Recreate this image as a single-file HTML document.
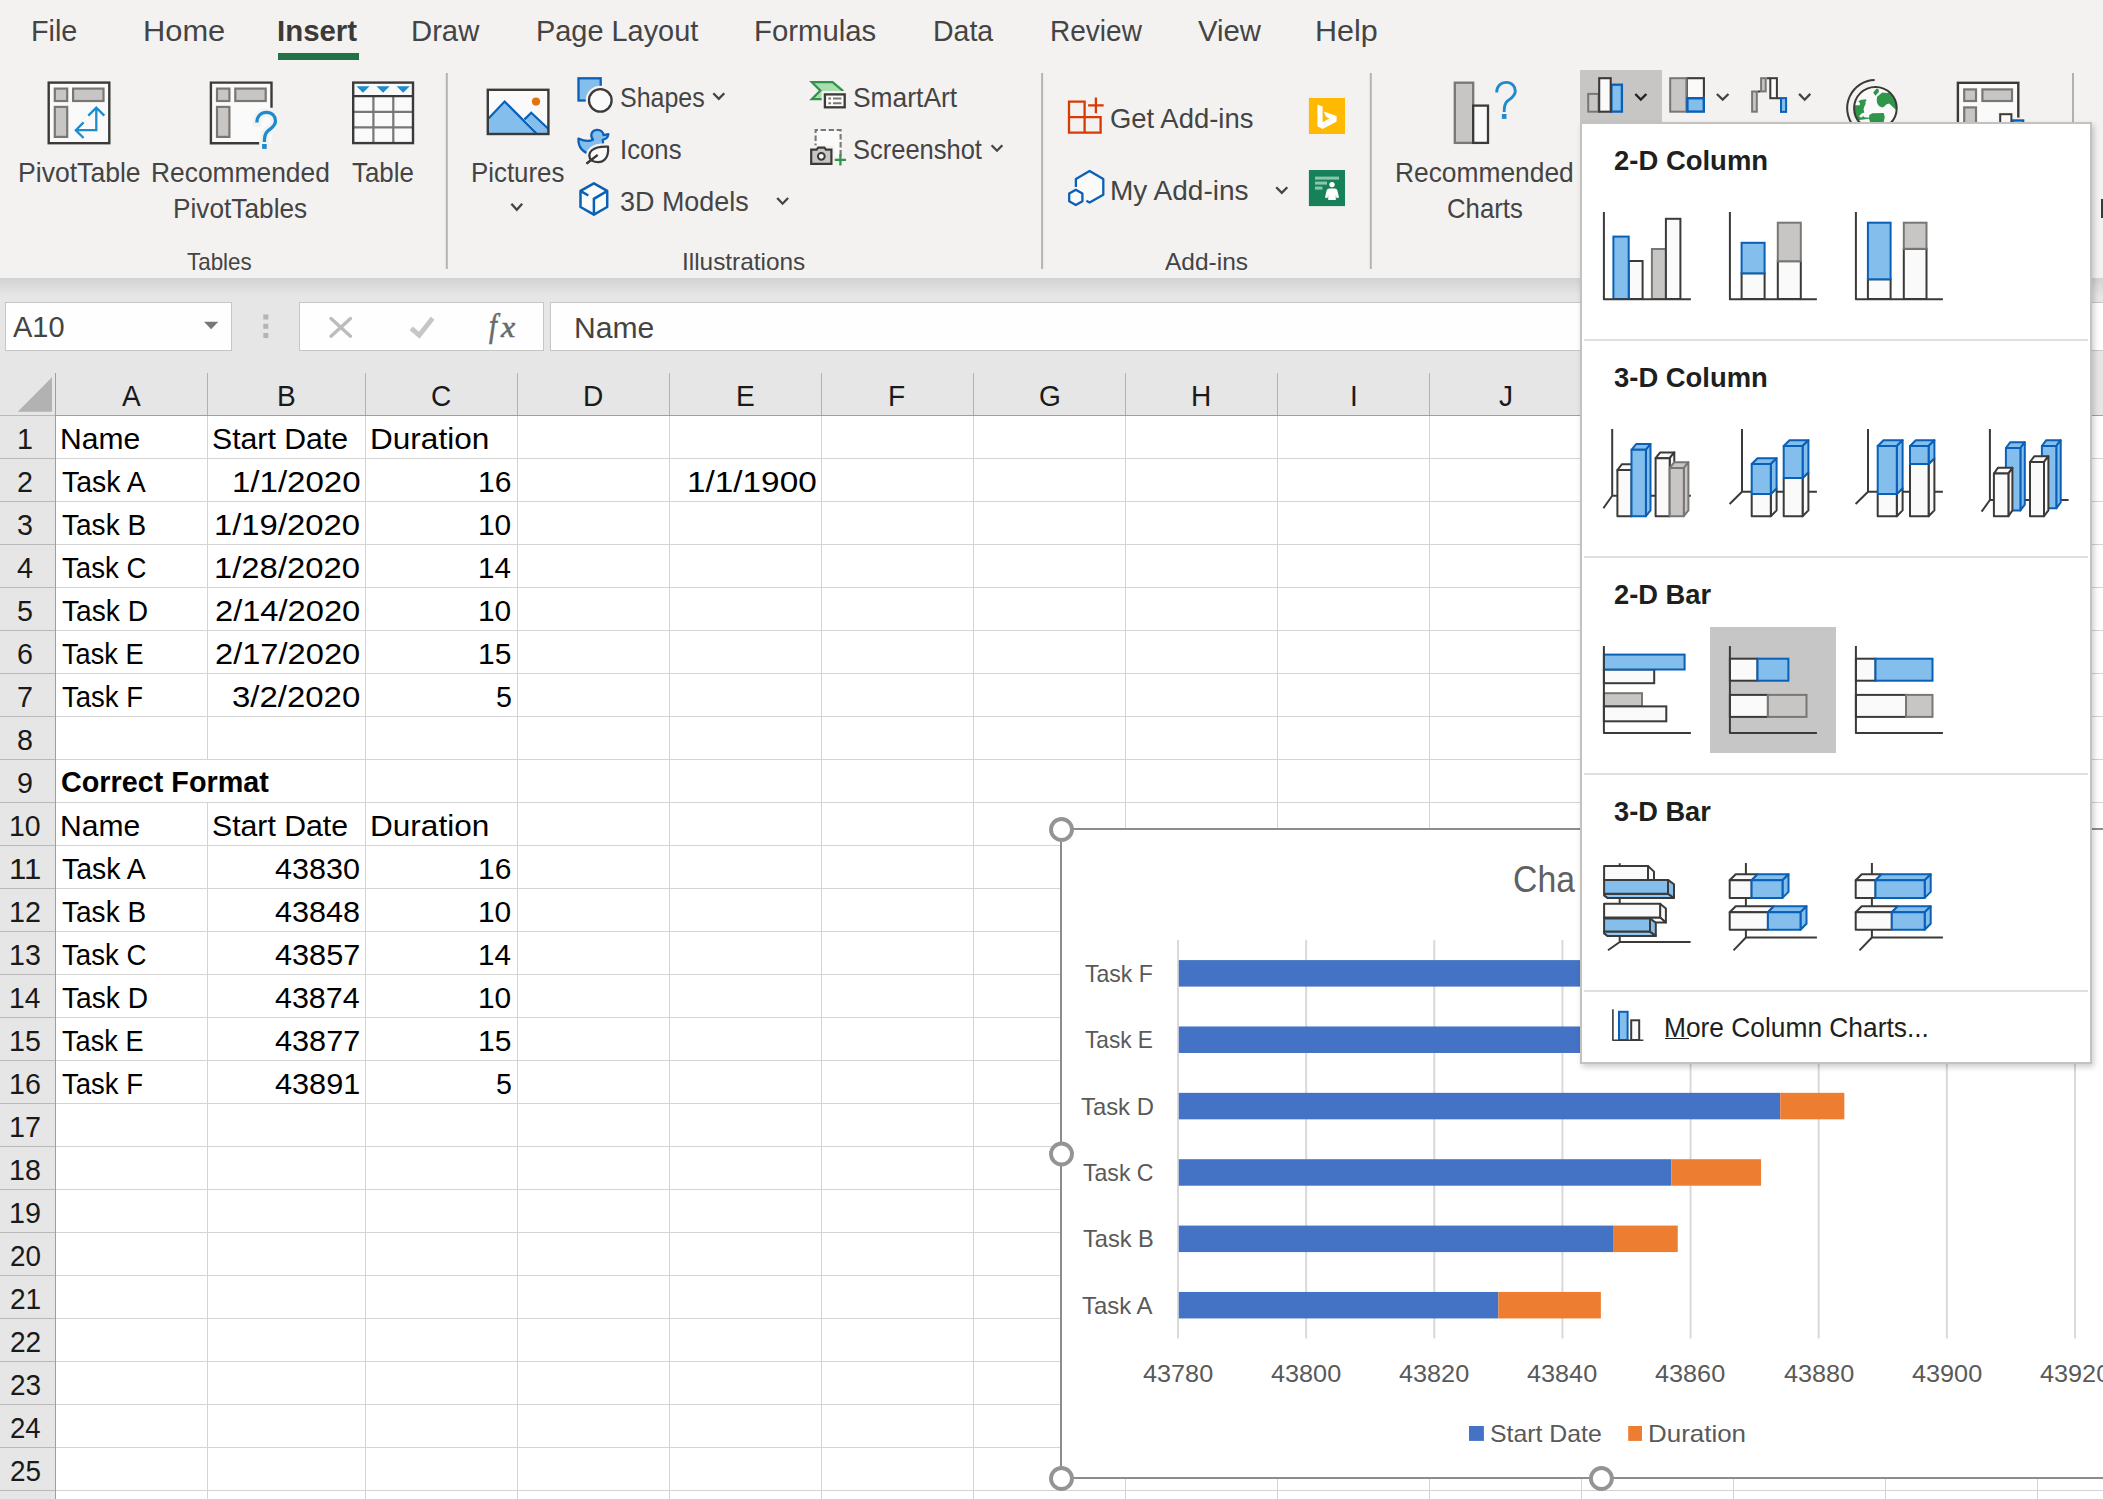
<!DOCTYPE html>
<html lang="en"><head><meta charset="utf-8"><title>Excel</title><style>
*{margin:0;padding:0;box-sizing:border-box}
html,body{width:2103px;height:1499px;overflow:hidden;background:#fff}
body{font-family:"Liberation Sans",sans-serif;position:relative}
#r{position:absolute;left:0;top:0;width:2103px;height:1499px;overflow:hidden}
#r div,#r svg{position:absolute}
.t{position:absolute;white-space:pre;transform-origin:0 0;display:block}
</style></head><body><div id="r">
<div style="left:0px;top:0px;width:2103px;height:278px;background:#f3f2f1;"></div>
<div style="left:0px;top:278px;width:2103px;height:137px;background:#e6e6e6;"></div>
<div style="left:0;top:278px;width:2103px;height:18px;background:linear-gradient(#d2d2d2,#d8d8d8 30%,#e6e6e6)"></div>
<div style="left:0px;top:415px;width:55px;height:1084px;background:#e6e6e6;"></div>
<svg width="2103" height="1499" viewBox="0 0 2103 1499" style="left:0;top:0" shape-rendering="crispEdges"><rect x="207" y="416" width="1" height="1083" fill="#d4d4d4"/><rect x="365" y="416" width="1" height="1083" fill="#d4d4d4"/><rect x="517" y="416" width="1" height="1083" fill="#d4d4d4"/><rect x="669" y="416" width="1" height="1083" fill="#d4d4d4"/><rect x="821" y="416" width="1" height="1083" fill="#d4d4d4"/><rect x="973" y="416" width="1" height="1083" fill="#d4d4d4"/><rect x="1125" y="416" width="1" height="1083" fill="#d4d4d4"/><rect x="1277" y="416" width="1" height="1083" fill="#d4d4d4"/><rect x="1429" y="416" width="1" height="1083" fill="#d4d4d4"/><rect x="1581" y="416" width="1" height="1083" fill="#d4d4d4"/><rect x="1733" y="416" width="1" height="1083" fill="#d4d4d4"/><rect x="1885" y="416" width="1" height="1083" fill="#d4d4d4"/><rect x="2037" y="416" width="1" height="1083" fill="#d4d4d4"/><rect x="56" y="458" width="2047" height="1" fill="#d4d4d4"/><rect x="56" y="501" width="2047" height="1" fill="#d4d4d4"/><rect x="56" y="544" width="2047" height="1" fill="#d4d4d4"/><rect x="56" y="587" width="2047" height="1" fill="#d4d4d4"/><rect x="56" y="630" width="2047" height="1" fill="#d4d4d4"/><rect x="56" y="673" width="2047" height="1" fill="#d4d4d4"/><rect x="56" y="716" width="2047" height="1" fill="#d4d4d4"/><rect x="56" y="759" width="2047" height="1" fill="#d4d4d4"/><rect x="56" y="802" width="2047" height="1" fill="#d4d4d4"/><rect x="56" y="845" width="2047" height="1" fill="#d4d4d4"/><rect x="56" y="888" width="2047" height="1" fill="#d4d4d4"/><rect x="56" y="931" width="2047" height="1" fill="#d4d4d4"/><rect x="56" y="974" width="2047" height="1" fill="#d4d4d4"/><rect x="56" y="1017" width="2047" height="1" fill="#d4d4d4"/><rect x="56" y="1060" width="2047" height="1" fill="#d4d4d4"/><rect x="56" y="1103" width="2047" height="1" fill="#d4d4d4"/><rect x="56" y="1146" width="2047" height="1" fill="#d4d4d4"/><rect x="56" y="1189" width="2047" height="1" fill="#d4d4d4"/><rect x="56" y="1232" width="2047" height="1" fill="#d4d4d4"/><rect x="56" y="1275" width="2047" height="1" fill="#d4d4d4"/><rect x="56" y="1318" width="2047" height="1" fill="#d4d4d4"/><rect x="56" y="1361" width="2047" height="1" fill="#d4d4d4"/><rect x="56" y="1404" width="2047" height="1" fill="#d4d4d4"/><rect x="56" y="1447" width="2047" height="1" fill="#d4d4d4"/><rect x="56" y="1490" width="2047" height="1" fill="#d4d4d4"/><rect x="56" y="1533" width="2047" height="1" fill="#d4d4d4"/><rect x="207" y="760" width="1" height="42" fill="#fff"/><rect x="207" y="373" width="1" height="42" fill="#b1b1b1"/><rect x="365" y="373" width="1" height="42" fill="#b1b1b1"/><rect x="517" y="373" width="1" height="42" fill="#b1b1b1"/><rect x="669" y="373" width="1" height="42" fill="#b1b1b1"/><rect x="821" y="373" width="1" height="42" fill="#b1b1b1"/><rect x="973" y="373" width="1" height="42" fill="#b1b1b1"/><rect x="1125" y="373" width="1" height="42" fill="#b1b1b1"/><rect x="1277" y="373" width="1" height="42" fill="#b1b1b1"/><rect x="1429" y="373" width="1" height="42" fill="#b1b1b1"/><rect x="1581" y="373" width="1" height="42" fill="#b1b1b1"/><rect x="1733" y="373" width="1" height="42" fill="#b1b1b1"/><rect x="1885" y="373" width="1" height="42" fill="#b1b1b1"/><rect x="2037" y="373" width="1" height="42" fill="#b1b1b1"/><rect x="0" y="458" width="55" height="1" fill="#b9b9b9"/><rect x="0" y="501" width="55" height="1" fill="#b9b9b9"/><rect x="0" y="544" width="55" height="1" fill="#b9b9b9"/><rect x="0" y="587" width="55" height="1" fill="#b9b9b9"/><rect x="0" y="630" width="55" height="1" fill="#b9b9b9"/><rect x="0" y="673" width="55" height="1" fill="#b9b9b9"/><rect x="0" y="716" width="55" height="1" fill="#b9b9b9"/><rect x="0" y="759" width="55" height="1" fill="#b9b9b9"/><rect x="0" y="802" width="55" height="1" fill="#b9b9b9"/><rect x="0" y="845" width="55" height="1" fill="#b9b9b9"/><rect x="0" y="888" width="55" height="1" fill="#b9b9b9"/><rect x="0" y="931" width="55" height="1" fill="#b9b9b9"/><rect x="0" y="974" width="55" height="1" fill="#b9b9b9"/><rect x="0" y="1017" width="55" height="1" fill="#b9b9b9"/><rect x="0" y="1060" width="55" height="1" fill="#b9b9b9"/><rect x="0" y="1103" width="55" height="1" fill="#b9b9b9"/><rect x="0" y="1146" width="55" height="1" fill="#b9b9b9"/><rect x="0" y="1189" width="55" height="1" fill="#b9b9b9"/><rect x="0" y="1232" width="55" height="1" fill="#b9b9b9"/><rect x="0" y="1275" width="55" height="1" fill="#b9b9b9"/><rect x="0" y="1318" width="55" height="1" fill="#b9b9b9"/><rect x="0" y="1361" width="55" height="1" fill="#b9b9b9"/><rect x="0" y="1404" width="55" height="1" fill="#b9b9b9"/><rect x="0" y="1447" width="55" height="1" fill="#b9b9b9"/><rect x="0" y="1490" width="55" height="1" fill="#b9b9b9"/><rect x="0" y="1533" width="55" height="1" fill="#b9b9b9"/><rect x="0" y="415" width="55" height="1" fill="#b9b9b9"/><rect x="55" y="415" width="2048" height="1" fill="#9f9f9f"/><rect x="55" y="373" width="1" height="1126" fill="#9f9f9f"/></svg>
<svg width="40" height="40" style="left:15px;top:375px" viewBox="15 375 40 40"><path d="M17.7 411.7H52V377.3Z" fill="#b2b2b2"/></svg>
<div style="left:5px;top:302px;width:227px;height:49px;background:#fefefe;border:1px solid #c6c6c6"></div>
<div style="left:299px;top:302px;width:245px;height:49px;background:#fefefe;border:1px solid #c6c6c6"></div>
<div style="left:550px;top:302px;width:1560px;height:49px;background:#fefefe;border:1px solid #c6c6c6"></div>
<span class="t" style="left:12.70px;top:313px;font-size:28.6px;line-height:28.6px;color:#444;transform:scaleX(1.0139);">A10</span>
<span class="t" style="left:574.29px;top:314px;font-size:28.6px;line-height:28.6px;color:#444;transform:scaleX(1.0524);">Name</span>
<svg width="2103" height="100" viewBox="0 280 2103 100" style="left:0;top:280px"><path d="M204 321.7h14.3l-7.15 7.6z" fill="#75787b"/><rect x="263.3" y="314.5" width="5" height="5" fill="#b4b4b4"/><rect x="263.3" y="323.8" width="5" height="5" fill="#b4b4b4"/><rect x="263.3" y="333" width="5" height="5" fill="#b4b4b4"/><path d="M331 318.6l19.5 17.6M350.5 318.6l-19.5 17.6" stroke="#bcbcbc" stroke-width="3.4" fill="none" stroke-linecap="round"/><path d="M411.2 328.4L419.2 335.2L432.6 318.2" stroke="#c6c6c6" stroke-width="4.8" fill="none" stroke-linecap="butt" stroke-linejoin="miter"/></svg>
<span class="t" style="left:488.71px;top:309px;font-size:34px;line-height:34px;color:#6a6a6a;transform:scaleX(0.8403);font-style:italic;font-family:'Liberation Serif',serif;-webkit-text-stroke:0.6px #6a6a6a;">f</span>
<span class="t" style="left:500.98px;top:313px;font-size:29px;line-height:29px;color:#6a6a6a;transform:scaleX(1.0989);font-style:italic;font-family:'Liberation Serif',serif;-webkit-text-stroke:0.6px #6a6a6a;">x</span>
<span class="t" style="left:122.16px;top:381px;font-size:30.2px;line-height:30.2px;color:#1a1a1a;transform:scaleX(0.9300);">A</span>
<span class="t" style="left:276.74px;top:381px;font-size:30.2px;line-height:30.2px;color:#1a1a1a;transform:scaleX(0.9300);">B</span>
<span class="t" style="left:431.18px;top:381px;font-size:30.2px;line-height:30.2px;color:#1a1a1a;transform:scaleX(0.9300);">C</span>
<span class="t" style="left:582.90px;top:381px;font-size:30.2px;line-height:30.2px;color:#1a1a1a;transform:scaleX(0.9300);">D</span>
<span class="t" style="left:735.60px;top:381px;font-size:30.2px;line-height:30.2px;color:#1a1a1a;transform:scaleX(0.9300);">E</span>
<span class="t" style="left:888.30px;top:381px;font-size:30.2px;line-height:30.2px;color:#1a1a1a;transform:scaleX(0.9300);">F</span>
<span class="t" style="left:1038.90px;top:381px;font-size:30.2px;line-height:30.2px;color:#1a1a1a;transform:scaleX(0.9300);">G</span>
<span class="t" style="left:1191.32px;top:381px;font-size:30.2px;line-height:30.2px;color:#1a1a1a;transform:scaleX(0.9300);">H</span>
<span class="t" style="left:1349.57px;top:381px;font-size:30.2px;line-height:30.2px;color:#1a1a1a;transform:scaleX(0.9300);">I</span>
<span class="t" style="left:1499.25px;top:381px;font-size:30.2px;line-height:30.2px;color:#1a1a1a;transform:scaleX(0.9300);">J</span>
<span class="t" style="left:16.91px;top:424px;font-size:30.2px;line-height:30.2px;color:#1a1a1a;transform:scaleX(0.9500);">1</span>
<span class="t" style="left:17.27px;top:467px;font-size:30.2px;line-height:30.2px;color:#1a1a1a;transform:scaleX(0.9500);">2</span>
<span class="t" style="left:17.41px;top:510px;font-size:30.2px;line-height:30.2px;color:#1a1a1a;transform:scaleX(0.9500);">3</span>
<span class="t" style="left:17.41px;top:553px;font-size:30.2px;line-height:30.2px;color:#1a1a1a;transform:scaleX(0.9500);">4</span>
<span class="t" style="left:17.34px;top:596px;font-size:30.2px;line-height:30.2px;color:#1a1a1a;transform:scaleX(0.9500);">5</span>
<span class="t" style="left:17.20px;top:639px;font-size:30.2px;line-height:30.2px;color:#1a1a1a;transform:scaleX(0.9500);">6</span>
<span class="t" style="left:17.27px;top:682px;font-size:30.2px;line-height:30.2px;color:#1a1a1a;transform:scaleX(0.9500);">7</span>
<span class="t" style="left:17.34px;top:725px;font-size:30.2px;line-height:30.2px;color:#1a1a1a;transform:scaleX(0.9500);">8</span>
<span class="t" style="left:17.34px;top:768px;font-size:30.2px;line-height:30.2px;color:#1a1a1a;transform:scaleX(0.9500);">9</span>
<span class="t" style="left:9.16px;top:811px;font-size:30.2px;line-height:30.2px;color:#1a1a1a;transform:scaleX(0.9437);">10</span>
<span class="t" style="left:8.96px;top:854px;font-size:30.2px;line-height:30.2px;color:#1a1a1a;transform:scaleX(1.0314);">11</span>
<span class="t" style="left:9.14px;top:897px;font-size:30.2px;line-height:30.2px;color:#1a1a1a;transform:scaleX(0.9532);">12</span>
<span class="t" style="left:9.15px;top:940px;font-size:30.2px;line-height:30.2px;color:#1a1a1a;transform:scaleX(0.9485);">13</span>
<span class="t" style="left:9.18px;top:983px;font-size:30.2px;line-height:30.2px;color:#1a1a1a;transform:scaleX(0.9344);">14</span>
<span class="t" style="left:9.15px;top:1026px;font-size:30.2px;line-height:30.2px;color:#1a1a1a;transform:scaleX(0.9485);">15</span>
<span class="t" style="left:9.15px;top:1069px;font-size:30.2px;line-height:30.2px;color:#1a1a1a;transform:scaleX(0.9485);">16</span>
<span class="t" style="left:9.14px;top:1112px;font-size:30.2px;line-height:30.2px;color:#1a1a1a;transform:scaleX(0.9532);">17</span>
<span class="t" style="left:9.15px;top:1155px;font-size:30.2px;line-height:30.2px;color:#1a1a1a;transform:scaleX(0.9485);">18</span>
<span class="t" style="left:9.14px;top:1198px;font-size:30.2px;line-height:30.2px;color:#1a1a1a;transform:scaleX(0.9532);">19</span>
<span class="t" style="left:9.91px;top:1241px;font-size:30.2px;line-height:30.2px;color:#1a1a1a;transform:scaleX(0.9207);">20</span>
<span class="t" style="left:9.90px;top:1284px;font-size:30.2px;line-height:30.2px;color:#1a1a1a;transform:scaleX(0.9298);">21</span>
<span class="t" style="left:9.90px;top:1327px;font-size:30.2px;line-height:30.2px;color:#1a1a1a;transform:scaleX(0.9298);">22</span>
<span class="t" style="left:9.90px;top:1370px;font-size:30.2px;line-height:30.2px;color:#1a1a1a;transform:scaleX(0.9252);">23</span>
<span class="t" style="left:9.92px;top:1413px;font-size:30.2px;line-height:30.2px;color:#1a1a1a;transform:scaleX(0.9118);">24</span>
<span class="t" style="left:9.90px;top:1456px;font-size:30.2px;line-height:30.2px;color:#1a1a1a;transform:scaleX(0.9252);">25</span>
<span class="t" style="left:60.20px;top:424px;font-size:30.2px;line-height:30.2px;color:#000;transform:scaleX(0.9953);">Name</span>
<span class="t" style="left:212.34px;top:424px;font-size:30.2px;line-height:30.2px;color:#000;transform:scaleX(1.0013);">Start Date</span>
<span class="t" style="left:370.27px;top:424px;font-size:30.2px;line-height:30.2px;color:#000;transform:scaleX(1.0452);">Duration</span>
<span class="t" style="left:60.20px;top:811px;font-size:30.2px;line-height:30.2px;color:#000;transform:scaleX(0.9953);">Name</span>
<span class="t" style="left:212.34px;top:811px;font-size:30.2px;line-height:30.2px;color:#000;transform:scaleX(1.0013);">Start Date</span>
<span class="t" style="left:370.27px;top:811px;font-size:30.2px;line-height:30.2px;color:#000;transform:scaleX(1.0452);">Duration</span>
<span class="t" style="left:62.03px;top:467px;font-size:30.2px;line-height:30.2px;color:#000;transform:scaleX(0.9419);">Task A</span>
<span class="t" style="left:478.15px;top:467px;font-size:30.2px;line-height:30.2px;color:#000;transform:scaleX(0.9950);">16</span>
<span class="t" style="left:62.03px;top:854px;font-size:30.2px;line-height:30.2px;color:#000;transform:scaleX(0.9419);">Task A</span>
<span class="t" style="left:478.15px;top:854px;font-size:30.2px;line-height:30.2px;color:#000;transform:scaleX(0.9950);">16</span>
<span class="t" style="left:231.52px;top:467px;font-size:30.2px;line-height:30.2px;color:#000;transform:scaleX(1.0941);">1/1/2020</span>
<span class="t" style="left:274.99px;top:854px;font-size:30.2px;line-height:30.2px;color:#000;transform:scaleX(1.0122);">43830</span>
<span class="t" style="left:62.04px;top:510px;font-size:30.2px;line-height:30.2px;color:#000;transform:scaleX(0.9290);">Task B</span>
<span class="t" style="left:478.16px;top:510px;font-size:30.2px;line-height:30.2px;color:#000;transform:scaleX(0.9901);">10</span>
<span class="t" style="left:62.04px;top:897px;font-size:30.2px;line-height:30.2px;color:#000;transform:scaleX(0.9290);">Task B</span>
<span class="t" style="left:478.16px;top:897px;font-size:30.2px;line-height:30.2px;color:#000;transform:scaleX(0.9901);">10</span>
<span class="t" style="left:213.94px;top:510px;font-size:30.2px;line-height:30.2px;color:#000;transform:scaleX(1.0872);">1/19/2020</span>
<span class="t" style="left:274.99px;top:897px;font-size:30.2px;line-height:30.2px;color:#000;transform:scaleX(1.0141);">43848</span>
<span class="t" style="left:62.05px;top:553px;font-size:30.2px;line-height:30.2px;color:#000;transform:scaleX(0.9150);">Task C</span>
<span class="t" style="left:478.18px;top:553px;font-size:30.2px;line-height:30.2px;color:#000;transform:scaleX(0.9803);">14</span>
<span class="t" style="left:62.05px;top:940px;font-size:30.2px;line-height:30.2px;color:#000;transform:scaleX(0.9150);">Task C</span>
<span class="t" style="left:478.18px;top:940px;font-size:30.2px;line-height:30.2px;color:#000;transform:scaleX(0.9803);">14</span>
<span class="t" style="left:213.94px;top:553px;font-size:30.2px;line-height:30.2px;color:#000;transform:scaleX(1.0872);">1/28/2020</span>
<span class="t" style="left:274.99px;top:940px;font-size:30.2px;line-height:30.2px;color:#000;transform:scaleX(1.0159);">43857</span>
<span class="t" style="left:62.04px;top:596px;font-size:30.2px;line-height:30.2px;color:#000;transform:scaleX(0.9325);">Task D</span>
<span class="t" style="left:478.16px;top:596px;font-size:30.2px;line-height:30.2px;color:#000;transform:scaleX(0.9901);">10</span>
<span class="t" style="left:62.04px;top:983px;font-size:30.2px;line-height:30.2px;color:#000;transform:scaleX(0.9325);">Task D</span>
<span class="t" style="left:478.16px;top:983px;font-size:30.2px;line-height:30.2px;color:#000;transform:scaleX(0.9901);">10</span>
<span class="t" style="left:214.77px;top:596px;font-size:30.2px;line-height:30.2px;color:#000;transform:scaleX(1.0810);">2/14/2020</span>
<span class="t" style="left:274.99px;top:983px;font-size:30.2px;line-height:30.2px;color:#000;transform:scaleX(1.0085);">43874</span>
<span class="t" style="left:62.06px;top:639px;font-size:30.2px;line-height:30.2px;color:#000;transform:scaleX(0.8999);">Task E</span>
<span class="t" style="left:478.15px;top:639px;font-size:30.2px;line-height:30.2px;color:#000;transform:scaleX(0.9950);">15</span>
<span class="t" style="left:62.06px;top:1026px;font-size:30.2px;line-height:30.2px;color:#000;transform:scaleX(0.8999);">Task E</span>
<span class="t" style="left:478.15px;top:1026px;font-size:30.2px;line-height:30.2px;color:#000;transform:scaleX(0.9950);">15</span>
<span class="t" style="left:214.77px;top:639px;font-size:30.2px;line-height:30.2px;color:#000;transform:scaleX(1.0810);">2/17/2020</span>
<span class="t" style="left:274.99px;top:1026px;font-size:30.2px;line-height:30.2px;color:#000;transform:scaleX(1.0159);">43877</span>
<span class="t" style="left:62.05px;top:682px;font-size:30.2px;line-height:30.2px;color:#000;transform:scaleX(0.9109);">Task F</span>
<span class="t" style="left:495.55px;top:682px;font-size:30.2px;line-height:30.2px;color:#000;transform:scaleX(0.9481);">5</span>
<span class="t" style="left:62.05px;top:1069px;font-size:30.2px;line-height:30.2px;color:#000;transform:scaleX(0.9109);">Task F</span>
<span class="t" style="left:495.55px;top:1069px;font-size:30.2px;line-height:30.2px;color:#000;transform:scaleX(0.9481);">5</span>
<span class="t" style="left:231.85px;top:682px;font-size:30.2px;line-height:30.2px;color:#000;transform:scaleX(1.0913);">3/2/2020</span>
<span class="t" style="left:274.99px;top:1069px;font-size:30.2px;line-height:30.2px;color:#000;transform:scaleX(1.0159);">43891</span>
<span class="t" style="left:686.50px;top:467px;font-size:30.2px;line-height:30.2px;color:#000;transform:scaleX(1.1038);">1/1/1900</span>
<span class="t" style="left:60.55px;top:767px;font-size:30.2px;line-height:30.2px;color:#000;transform:scaleX(0.9535);font-weight:700;">Correct Format</span>
<div style="left:1061px;top:829px;width:1100px;height:649px;background:#fff"></div>
<svg width="2103" height="1499" viewBox="0 0 2103 1499" style="left:0;top:0"><rect x="1177.00" y="940.2" width="2" height="398.2" fill="#d9d9d9"/><rect x="1305.14" y="940.2" width="2" height="398.2" fill="#d9d9d9"/><rect x="1433.28" y="940.2" width="2" height="398.2" fill="#d9d9d9"/><rect x="1561.42" y="940.2" width="2" height="398.2" fill="#d9d9d9"/><rect x="1689.56" y="940.2" width="2" height="398.2" fill="#d9d9d9"/><rect x="1817.70" y="940.2" width="2" height="398.2" fill="#d9d9d9"/><rect x="1945.84" y="940.2" width="2" height="398.2" fill="#d9d9d9"/><rect x="2073.98" y="940.2" width="2" height="398.2" fill="#d9d9d9"/><rect x="1178.80" y="960.10" width="710.38" height="26.5" fill="#4472c4"/><rect x="1889.18" y="960.10" width="32.04" height="26.5" fill="#ed7d31"/><rect x="1178.80" y="1026.47" width="620.68" height="26.5" fill="#4472c4"/><rect x="1799.48" y="1026.47" width="96.11" height="26.5" fill="#ed7d31"/><rect x="1178.80" y="1092.84" width="601.46" height="26.5" fill="#4472c4"/><rect x="1780.26" y="1092.84" width="64.07" height="26.5" fill="#ed7d31"/><rect x="1178.80" y="1159.21" width="492.54" height="26.5" fill="#4472c4"/><rect x="1671.34" y="1159.21" width="89.70" height="26.5" fill="#ed7d31"/><rect x="1178.80" y="1225.58" width="434.88" height="26.5" fill="#4472c4"/><rect x="1613.68" y="1225.58" width="64.07" height="26.5" fill="#ed7d31"/><rect x="1178.80" y="1291.95" width="319.55" height="26.5" fill="#4472c4"/><rect x="1498.35" y="1291.95" width="102.51" height="26.5" fill="#ed7d31"/><rect x="1469" y="1426" width="14.9" height="14.9" fill="#4472c4"/><rect x="1628.2" y="1426" width="13.8" height="14.9" fill="#ed7d31"/><path d="M1061 829H2110M1061 829V1478H2110" stroke="#8c8c8c" stroke-width="2" fill="none"/><circle cx="1061.5" cy="829.5" r="10.5" fill="#fff" stroke="#949494" stroke-width="3.9"/><circle cx="1061.5" cy="1154.0" r="10.5" fill="#fff" stroke="#949494" stroke-width="3.9"/><circle cx="1061.5" cy="1478.5" r="10.5" fill="#fff" stroke="#949494" stroke-width="3.9"/><circle cx="1601.4" cy="1478.5" r="10.5" fill="#fff" stroke="#949494" stroke-width="3.9"/></svg>
<span class="t" style="left:1084.74px;top:963px;font-size:23.6px;line-height:23.6px;color:#595959;transform:scaleX(0.9765);">Task F</span>
<span class="t" style="left:1084.75px;top:1029px;font-size:23.6px;line-height:23.6px;color:#595959;transform:scaleX(0.9599);">Task E</span>
<span class="t" style="left:1080.82px;top:1096px;font-size:23.6px;line-height:23.6px;color:#595959;transform:scaleX(1.0104);">Task D</span>
<span class="t" style="left:1082.94px;top:1162px;font-size:23.6px;line-height:23.6px;color:#595959;transform:scaleX(0.9774);">Task C</span>
<span class="t" style="left:1082.93px;top:1228px;font-size:23.6px;line-height:23.6px;color:#595959;transform:scaleX(1.0008);">Task B</span>
<span class="t" style="left:1082.12px;top:1295px;font-size:23.6px;line-height:23.6px;color:#595959;transform:scaleX(1.0141);">Task A</span>
<span class="t" style="left:1142.80px;top:1363px;font-size:23.6px;line-height:23.6px;color:#595959;transform:scaleX(1.0698);">43780</span>
<span class="t" style="left:1270.94px;top:1363px;font-size:23.6px;line-height:23.6px;color:#595959;transform:scaleX(1.0698);">43800</span>
<span class="t" style="left:1399.08px;top:1363px;font-size:23.6px;line-height:23.6px;color:#595959;transform:scaleX(1.0698);">43820</span>
<span class="t" style="left:1527.22px;top:1363px;font-size:23.6px;line-height:23.6px;color:#595959;transform:scaleX(1.0698);">43840</span>
<span class="t" style="left:1655.36px;top:1363px;font-size:23.6px;line-height:23.6px;color:#595959;transform:scaleX(1.0698);">43860</span>
<span class="t" style="left:1783.50px;top:1363px;font-size:23.6px;line-height:23.6px;color:#595959;transform:scaleX(1.0698);">43880</span>
<span class="t" style="left:1911.64px;top:1363px;font-size:23.6px;line-height:23.6px;color:#595959;transform:scaleX(1.0698);">43900</span>
<span class="t" style="left:2039.78px;top:1363px;font-size:23.6px;line-height:23.6px;color:#595959;transform:scaleX(1.0698);">43920</span>
<span class="t" style="left:1490.08px;top:1423px;font-size:23.6px;line-height:23.6px;color:#595959;transform:scaleX(1.0519);">Start Date</span>
<span class="t" style="left:1648.43px;top:1423px;font-size:23.6px;line-height:23.6px;color:#595959;transform:scaleX(1.0989);">Duration</span>
<span class="t" style="left:1513.31px;top:862px;font-size:36px;line-height:36px;color:#606060;transform:scaleX(0.9389);">Cha</span>
<span class="t" style="left:31.00px;top:16px;font-size:30.2px;line-height:30.2px;color:#444;transform:scaleX(0.9534);">File</span>
<span class="t" style="left:143.03px;top:16px;font-size:30.2px;line-height:30.2px;color:#444;transform:scaleX(1.0214);">Home</span>
<span class="t" style="left:410.66px;top:16px;font-size:30.2px;line-height:30.2px;color:#444;transform:scaleX(0.9691);">Draw</span>
<span class="t" style="left:535.69px;top:16px;font-size:30.2px;line-height:30.2px;color:#444;transform:scaleX(0.9572);">Page Layout</span>
<span class="t" style="left:753.65px;top:16px;font-size:30.2px;line-height:30.2px;color:#444;transform:scaleX(0.9717);">Formulas</span>
<span class="t" style="left:933.02px;top:16px;font-size:30.2px;line-height:30.2px;color:#444;transform:scaleX(0.9437);">Data</span>
<span class="t" style="left:1049.76px;top:16px;font-size:30.2px;line-height:30.2px;color:#444;transform:scaleX(0.9282);">Review</span>
<span class="t" style="left:1198.00px;top:16px;font-size:30.2px;line-height:30.2px;color:#444;transform:scaleX(0.9703);">View</span>
<span class="t" style="left:1315.26px;top:16px;font-size:30.2px;line-height:30.2px;color:#444;transform:scaleX(1.0096);">Help</span>
<span class="t" style="left:277.09px;top:16px;font-size:30.2px;line-height:30.2px;color:#3b3a39;transform:scaleX(0.9746);font-weight:700;">Insert</span>
<div style="left:278px;top:52.7px;width:80.5px;height:7.3px;background:#217346;"></div>
<span class="t" style="left:17.87px;top:158px;font-size:28.3px;line-height:28.3px;color:#444;transform:scaleX(0.9394);">PivotTable</span>
<span class="t" style="left:151.29px;top:158px;font-size:28.3px;line-height:28.3px;color:#444;transform:scaleX(0.9318);">Recommended</span>
<span class="t" style="left:173.40px;top:194px;font-size:28.3px;line-height:28.3px;color:#444;transform:scaleX(0.9272);">PivotTables</span>
<span class="t" style="left:352.18px;top:158px;font-size:28.3px;line-height:28.3px;color:#444;transform:scaleX(0.9145);">Table</span>
<span class="t" style="left:471.23px;top:158px;font-size:28.3px;line-height:28.3px;color:#444;transform:scaleX(0.9140);">Pictures</span>
<span class="t" style="left:619.78px;top:83px;font-size:28.3px;line-height:28.3px;color:#444;transform:scaleX(0.8818);">Shapes</span>
<span class="t" style="left:619.68px;top:135px;font-size:28.3px;line-height:28.3px;color:#444;transform:scaleX(0.9095);">Icons</span>
<span class="t" style="left:620.46px;top:187px;font-size:28.3px;line-height:28.3px;color:#444;transform:scaleX(0.9513);">3D Models</span>
<span class="t" style="left:852.81px;top:83px;font-size:28.3px;line-height:28.3px;color:#444;transform:scaleX(0.9326);">SmartArt</span>
<span class="t" style="left:852.85px;top:135px;font-size:28.3px;line-height:28.3px;color:#444;transform:scaleX(0.9007);">Screenshot</span>
<span class="t" style="left:1110.23px;top:104px;font-size:28.3px;line-height:28.3px;color:#444;transform:scaleX(0.9700);">Get Add-ins</span>
<span class="t" style="left:1110.16px;top:176px;font-size:28.3px;line-height:28.3px;color:#444;transform:scaleX(0.9898);">My Add-ins</span>
<span class="t" style="left:1395.39px;top:158px;font-size:28.3px;line-height:28.3px;color:#444;transform:scaleX(0.9313);">Recommended</span>
<span class="t" style="left:1446.61px;top:194px;font-size:28.3px;line-height:28.3px;color:#444;transform:scaleX(0.9093);">Charts</span>
<span class="t" style="left:187.45px;top:250px;font-size:23.8px;line-height:23.8px;color:#444;transform:scaleX(0.9411);">Tables</span>
<span class="t" style="left:682.11px;top:250px;font-size:23.8px;line-height:23.8px;color:#444;transform:scaleX(1.0242);">Illustrations</span>
<span class="t" style="left:1164.50px;top:250px;font-size:23.8px;line-height:23.8px;color:#444;transform:scaleX(1.0294);">Add-ins</span>
<div style="left:1580px;top:70px;width:82px;height:56px;background:#c8c6c4;"></div>
<svg width="2103" height="300" viewBox="0 0 2103 300" style="left:0;top:0" fill="none"><rect x="445.8" y="73" width="2" height="196" fill="#b6b3b0"/><rect x="1041.1" y="73" width="2" height="196" fill="#b6b3b0"/><rect x="1369.8" y="73" width="2" height="196" fill="#b6b3b0"/><rect x="2072" y="73" width="2" height="50" fill="#b3afac"/><rect x="2101" y="199" width="2" height="19" fill="#3b3a39"/><rect x="48.7" y="82.60000000000001" width="60.6" height="60.6" fill="#fafafa" stroke="#3b3a39" stroke-width="2.4"/><rect x="54.8" y="88.60000000000001" width="12.4" height="12.4" fill="#c8c6c4" stroke="#797775" stroke-width="2.2"/><rect x="73.1" y="88.60000000000001" width="30.4" height="12.4" fill="#c8c6c4" stroke="#797775" stroke-width="2.2"/><rect x="54.8" y="106.9" width="12.4" height="30" fill="#c8c6c4" stroke="#797775" stroke-width="2.2"/><path d="M96.3 108V130.2H76.5M88.3 115.6L96.3 107.6L104.3 115.6M83.6 122.4L75.8 130.2L83.6 138" stroke="#1e8bcd" stroke-width="2.3"/><rect x="210.89999999999998" y="82.60000000000001" width="60.6" height="60.6" fill="#fafafa"/><path d="M271.5 107.7V82.60000000000001H210.89999999999998V143.2H259.3" stroke="#3b3a39" stroke-width="2.4"/><rect x="217.0" y="88.60000000000001" width="12.4" height="12.4" fill="#c8c6c4" stroke="#797775" stroke-width="2.2"/><rect x="235.29999999999998" y="88.60000000000001" width="30.4" height="12.4" fill="#c8c6c4" stroke="#797775" stroke-width="2.2"/><rect x="217.0" y="106.9" width="12.4" height="30" fill="#c8c6c4" stroke="#797775" stroke-width="2.2"/><path d="M256.9 122.6C256.9 116.1 261.1 112.4 266.6 112.4C272.1 112.4 275.5 116.2 275.5 121.0C275.5 126.1 271.1 128.4 267.5 131.2C264.8 133.6 264.4 136.6 264.4 141.9" stroke="#f3f2f1" stroke-width="8.5" stroke-linecap="square"/><rect x="259.5" y="141.4" width="9.8" height="10.2" fill="#f3f2f1"/><path d="M256.9 122.6C256.9 116.1 261.1 112.4 266.6 112.4C272.1 112.4 275.5 116.2 275.5 121.0C275.5 126.1 271.1 128.4 267.5 131.2C264.8 133.6 264.4 136.6 264.4 141.9" stroke="#1e8bcd" stroke-width="3.3"/><rect x="262.1" y="144.0" width="4.6" height="4.9" fill="#1e8bcd"/><rect x="353.2" y="82.6" width="59.8" height="60.5" fill="#fafafa"/><path d="M373.4 96V143M393.3 96V143M353 111.8H413M353 127.4H413" stroke="#797775" stroke-width="2.2"/><rect x="353.2" y="82.6" width="59.8" height="60.5" stroke="#3b3a39" stroke-width="2.4"/><path d="M353 96.2H413" stroke="#3b3a39" stroke-width="2.2"/><path d="M356.4 86.2h13.2l-6.6 6.6z" fill="#1e8bcd"/><path d="M376.5 86.2h13.2l-6.6 6.6z" fill="#1e8bcd"/><path d="M396.59999999999997 86.2h13.2l-6.6 6.6z" fill="#1e8bcd"/><rect x="487.8" y="89.8" width="60.6" height="44.2" fill="#fafafa"/><path d="M488.5 118.5L504.6 101.5L536 133.2H488.5z" fill="#83beec"/><path d="M524.5 119L531.2 112.6L548 128.5V133.2H538z" fill="#83beec"/><path d="M488.5 118.5L504.6 101.5L536.6 133.6M524.5 119.4L531.2 112.8L548 128.5" stroke="#0a60b6" stroke-width="2.2"/><rect x="487.8" y="89.8" width="60.6" height="44.2" stroke="#3b3a39" stroke-width="2.4"/><circle cx="536" cy="101.6" r="4.1" fill="#e3730c"/><path d="M511.4 203.7L516.8 209.8L522.2 203.7" stroke="#444" stroke-width="2.3"/><rect x="578.5" y="78.3" width="22.2" height="22.2" fill="#83beec" stroke="#0a60b6" stroke-width="2.3"/><circle cx="600.3" cy="100.4" r="14.6" fill="#f3f2f1"/><circle cx="600.3" cy="100.4" r="11.3" fill="#fafafa" stroke="#3b3a39" stroke-width="2.3"/><path d="M713.3 93.2L718.8 98.8L724.3 93.2" stroke="#444" stroke-width="2.3"/><path d="M578.4 138.5C586 142 590.5 141 593 139.8C589.6 135.5 591.5 130.2 596.8 129.8C601.2 129.6 603.6 132.8 603.4 135.2L608.4 134.2C608 137.4 605.6 139.4 602.6 139.8C603.4 142 603 144 602.4 145.2L589.6 153.5C583.6 152.8 578 147.8 578.4 138.5Z" fill="#83beec" stroke="#0a60b6" stroke-width="2.2" stroke-linejoin="round"/><path d="M586.5 163.6L590.8 160.2C586.6 152.4 592.2 146 608 146.6C609.2 158 603 166 590.8 160.2L600.6 152.8" fill="#f3f2f1" stroke="#f3f2f1" stroke-width="6.5" stroke-linejoin="round"/><path d="M586.5 163.6L597.6 155M590.8 160.2C586.6 152.4 592.2 146 608 146.6C609.2 158 603 166 590.8 160.2Z" fill="#fafafa" stroke="#3b3a39" stroke-width="2.2" stroke-linejoin="round"/><path d="M586.5 163.6L597.6 155" stroke="#3b3a39" stroke-width="2.2"/><path d="M593.9 183.3L607.2 190.9V207L593.9 214.7L580.5 207V190.9Z" fill="#fafafa" stroke="#0a60b6" stroke-width="2.5" stroke-linejoin="round"/><path d="M607 191.1L593.9 198.8V214.4M580.8 191.1L588.3 195.5" stroke="#0a60b6" stroke-width="2.5"/><path d="M777.2 198.0L782.6 203.7L788.1 198.0" stroke="#444" stroke-width="2.3"/><path d="M811.8 82.2H832.6L842.6 90.6V99.2H811.8L820.4 90.6Z" fill="#a9deb0" stroke="#2f9448" stroke-width="2.2" stroke-linejoin="miter"/><rect x="821.6" y="91" width="26.6" height="19.6" fill="#f3f2f1"/><rect x="824.9" y="94.4" width="19.8" height="12.9" fill="#fafafa" stroke="#3b3a39" stroke-width="2.3"/><path d="M828.4 98.4h2.6M833 98.4h8.4M828.4 103.2h2.6M833 103.2h8.4" stroke="#797775" stroke-width="2"/><rect x="815.6" y="130" width="25" height="27" fill="#fafafa"/><path d="M815.6 157V130H840.6V157" stroke="#797775" stroke-width="2.1" stroke-dasharray="5.4 2.6"/><rect x="808.4" y="145.4" width="26" height="21" fill="#f3f2f1"/><path d="M811.2 149.6H816.6L818.2 147.6H824.4L826 149.6H831.4V163.8H811.2Z" fill="#c8c6c4" stroke="#3b3a39" stroke-width="2.2"/><circle cx="821.3" cy="156.3" r="3.4" fill="#fafafa" stroke="#3b3a39" stroke-width="2"/><path d="M834.8 159.9H846M840.4 154.3V165.5" stroke="#2f9448" stroke-width="2.3"/><path d="M991.6 145.2L997.0 150.7L1002.3 145.2" stroke="#444" stroke-width="2.3"/><path d="M1069 101.6H1084.6V132.6H1069ZM1069 117.2H1100.6V132.6H1084.6" stroke="#d83b01" stroke-width="2.3"/><path d="M1095.9 97.6V113.2M1088.1 105.4H1103.7" stroke="#d83b01" stroke-width="2.3"/><path d="M1075.9 186.9V178.9L1089.6 171.0L1103.3 178.9L1103.3 194.7L1089.6 202.6L1086.4 200.8" fill="#fafafa" stroke="#0a60b6" stroke-width="2.3" stroke-linejoin="round"/><path d="M1075.8 189.8L1082.4 193.6L1082.4 201.2L1075.8 205.0L1069.2 201.2L1069.2 193.6Z" fill="#fafafa" stroke="#0a60b6" stroke-width="2.3" stroke-linejoin="round"/><path d="M1276.2 187.2L1281.8 192.8L1287.3 187.2" stroke="#444" stroke-width="2.3"/><rect x="1308.9" y="98" width="36.1" height="36" fill="#ffb900"/><path d="M1317.4 104.6L1322.6 106.4V122.2L1329.4 118.4L1326 116.8L1323.8 111.6L1336.6 116V121.4L1322.6 129L1317.4 126.2Z" fill="#fff"/><rect x="1308.9" y="170" width="36.1" height="36.1" fill="#17825a"/><rect x="1315" y="176.6" width="24" height="3" fill="#8cc6ae"/><rect x="1315" y="181.6" width="12" height="3" fill="#8cc6ae"/><rect x="1315" y="186.6" width="7.4" height="3" fill="#8cc6ae"/><circle cx="1332" cy="184.6" r="2.7" fill="#fff"/><path d="M1325 197.6L1326.6 190.6Q1327.2 188.4 1329.4 188.4H1334.6Q1336.8 188.4 1337.4 190.6L1339 197.6L1336.6 198.2L1335.8 195V200H1328.2V195L1327.4 198.2Z" fill="#fff"/><rect x="1454.8" y="82.7" width="18.4" height="60.2" fill="#c8c6c4" stroke="#797775" stroke-width="2.3"/><rect x="1473.2" y="105.6" width="14.8" height="37.3" fill="#fafafa" stroke="#3b3a39" stroke-width="2.3"/><path d="M1496.7 92.6C1496.7 86.1 1500.9 82.4 1506.4 82.4C1511.9 82.4 1515.3 86.2 1515.3 91.0C1515.3 96.1 1510.9 98.4 1507.3 101.2C1504.6 103.6 1504.2 106.6 1504.2 111.9" stroke="#1e8bcd" stroke-width="2.9"/><rect x="1501.9" y="114.0" width="4.6" height="4.9" fill="#1e8bcd"/><rect x="1588.2" y="93.9" width="10.4" height="17.8" fill="#c8c6c4" stroke="#797775" stroke-width="2"/><rect x="1611.4" y="84.7" width="10.5" height="26.9" fill="#83beec" stroke="#0a60b6" stroke-width="2.3"/><rect x="1599.2" y="78.2" width="11.5" height="33.5" fill="#fafafa" stroke="#3b3a39" stroke-width="2.1"/><path d="M1635.3 94.0L1640.8 99.6L1646.4 94.0" stroke="#222" stroke-width="2.4"/><rect x="1686.8" y="78.2" width="17.1" height="20" fill="#fafafa" stroke="#3b3a39" stroke-width="2.1"/><rect x="1670.2" y="78.2" width="16.2" height="33.5" fill="#c8c6c4" stroke="#797775" stroke-width="2"/><rect x="1687.4" y="98.3" width="16.4" height="13.3" fill="#83beec" stroke="#0a60b6" stroke-width="2.4"/><path d="M1716.9 94.0L1722.7 99.6L1728.5 94.0" stroke="#444" stroke-width="2.3"/><rect x="1752.1" y="91.5" width="4.7" height="20.2" fill="#c8c6c4" stroke="#797775" stroke-width="2"/><rect x="1761.1" y="78.2" width="4.6" height="13.2" fill="#c8c6c4" stroke="#797775" stroke-width="2"/><path d="M1757.8 91.6H1760.2M1766.8 78.2H1770M1777.6 98.2H1780.2" stroke="#3b3a39" stroke-width="2"/><rect x="1770.3" y="78.2" width="6.6" height="20" fill="#fafafa" stroke="#3b3a39" stroke-width="2"/><rect x="1781" y="98.1" width="5.1" height="13.8" fill="#83beec" stroke="#0a60b6" stroke-width="2"/><path d="M1799.1 93.9L1804.7 99.7L1810.3 93.9" stroke="#444" stroke-width="2.3"/><circle cx="1875.4" cy="108.2" r="21.3" fill="#fafafa"/><clipPath id="gc"><circle cx="1875.4" cy="108.2" r="21.3"/></clipPath><g clip-path="url(#gc)" fill="#2f964a"><path d="M1873.2 92.4L1876.3 88.7L1878.5 88.9L1878.9 92.0L1875.4 95.7Z"/><path d="M1877.1 96.8L1882.2 92.6L1887.3 92.9L1891.4 92.0L1898.7 99.3L1898.7 112.2L1895.8 109.8L1892.8 107.1L1889.2 103.4L1886.6 104.3L1884.0 106.7L1882.2 107.4L1878.9 106.1L1877.1 103.0L1876.7 100.1Z"/><path d="M1852.8 105.4L1859.8 105.2L1860.0 103.0L1858.3 101.4L1860.5 100.1L1865.7 99.2L1866.6 100.4L1865.3 101.9L1865.7 103.7L1864.2 106.7L1863.5 109.6L1864.4 112.6L1861.6 113.5L1859.1 116.0L1860.9 117.7L1863.5 115.9L1864.2 117.3L1869.3 117.7L1869.3 118.8L1859.4 119.9L1854.7 121.4L1852.1 110.4Z"/><path d="M1869.3 115.1L1872.3 113.3L1883.7 113.1L1884.8 117.0L1883.7 122.1L1870.1 122.1L1869.0 118.8Z"/></g><circle cx="1875.4" cy="108.2" r="21.3" stroke="#3b3a39" stroke-width="2"/><path d="M1874.7 80A28.2 28.2 0 0 0 1853.5 126" stroke="#3b3a39" stroke-width="2"/><rect x="1957.9" y="82.8" width="60.4" height="60" fill="#fafafa" stroke="#3b3a39" stroke-width="2.4"/><rect x="1964.2" y="89.4" width="11.8" height="11.6" fill="#c8c6c4" stroke="#797775" stroke-width="2.2"/><rect x="1982.4" y="89.4" width="29.6" height="11.6" fill="#c8c6c4" stroke="#797775" stroke-width="2.2"/><rect x="1964.2" y="107.4" width="11.8" height="30" fill="#c8c6c4" stroke="#797775" stroke-width="2.2"/><rect x="1997.4" y="111.5" width="17" height="15" fill="#f6f5f4"/><rect x="2012" y="117.6" width="14" height="8" fill="#f3f2f1"/><rect x="2000.2" y="114.2" width="11.2" height="20" fill="#fafafa" stroke="#3b3a39" stroke-width="2"/><rect x="2012.6" y="120.4" width="10.6" height="14" fill="#83beec" stroke="#0a60b6" stroke-width="2.2"/></svg>
<div style="left:1580px;top:122px;width:512px;height:941.6px;background:#fff;border:2px solid #c4c2c0;box-shadow:1.5px 3px 6px rgba(0,0,0,0.2)"></div>
<div style="left:1710.3px;top:627.1px;width:125.5px;height:125.5px;background:#c6c6c6;"></div>
<div style="left:1584.2px;top:339.2px;width:504px;height:1.7px;background:#e1dfdd;"></div>
<div style="left:1584.2px;top:556.1px;width:504px;height:1.7px;background:#e1dfdd;"></div>
<div style="left:1584.2px;top:773.0px;width:504px;height:1.7px;background:#e1dfdd;"></div>
<div style="left:1584.2px;top:990.2px;width:504px;height:1.7px;background:#e1dfdd;"></div>
<span class="t" style="left:1614.18px;top:147px;font-size:28.0px;line-height:28.0px;color:#201f1e;transform:scaleX(0.9808);font-weight:700;">2-D Column</span>
<span class="t" style="left:1614.45px;top:364px;font-size:28.0px;line-height:28.0px;color:#201f1e;transform:scaleX(0.9791);font-weight:700;">3-D Column</span>
<span class="t" style="left:1614.18px;top:581px;font-size:28.0px;line-height:28.0px;color:#201f1e;transform:scaleX(0.9754);font-weight:700;">2-D Bar</span>
<span class="t" style="left:1614.46px;top:798px;font-size:28.0px;line-height:28.0px;color:#201f1e;transform:scaleX(0.9726);font-weight:700;">3-D Bar</span>
<span class="t" style="left:1664.09px;top:1014px;font-size:28.0px;line-height:28.0px;color:#201f1e;transform:scaleX(0.9403);">More Column Charts...</span>
<div style="left:1665px;top:1038px;width:24px;height:1px;background:#201f1e;"></div>
<svg width="2103" height="1499" viewBox="0 0 2103 1499" style="left:0;top:0" fill="none" stroke-linejoin="round"><rect x="1628.7" y="261.0" width="13.9" height="38.0" fill="#fafafa" stroke="#3b3a39" stroke-width="2.0" stroke-linejoin="miter"/><rect x="1613.4" y="236.6" width="15.3" height="62.4" fill="#83beec" stroke="#0a60b6" stroke-width="2.0" stroke-linejoin="miter"/><rect x="1651.9" y="249.0" width="14.0" height="50.0" fill="#c8c6c4" stroke="#797775" stroke-width="2.0" stroke-linejoin="miter"/><rect x="1665.9" y="218.8" width="14.5" height="80.2" fill="#fafafa" stroke="#3b3a39" stroke-width="2.0" stroke-linejoin="miter"/><path d="M1603.9 212.1V299.2H1690.9" stroke="#3b3a39" stroke-width="2.0"/><rect x="1741.6" y="273.3" width="23.0" height="25.7" fill="#fafafa" stroke="#3b3a39" stroke-width="2.0" stroke-linejoin="miter"/><rect x="1741.6" y="242.8" width="23.0" height="30.5" fill="#83beec" stroke="#0a60b6" stroke-width="2.0" stroke-linejoin="miter"/><rect x="1777.8" y="261.2" width="23.0" height="37.8" fill="#fafafa" stroke="#3b3a39" stroke-width="2.0" stroke-linejoin="miter"/><rect x="1777.8" y="222.7" width="23.0" height="38.5" fill="#c8c6c4" stroke="#797775" stroke-width="2.0" stroke-linejoin="miter"/><path d="M1729.9 212.1V299.2H1816.9" stroke="#3b3a39" stroke-width="2.0"/><rect x="1867.9" y="279.3" width="22.7" height="19.7" fill="#fafafa" stroke="#3b3a39" stroke-width="2.0" stroke-linejoin="miter"/><rect x="1867.9" y="222.7" width="22.7" height="56.6" fill="#83beec" stroke="#0a60b6" stroke-width="2.0" stroke-linejoin="miter"/><rect x="1903.8" y="248.8" width="22.7" height="50.2" fill="#fafafa" stroke="#3b3a39" stroke-width="2.0" stroke-linejoin="miter"/><rect x="1903.8" y="222.7" width="22.7" height="26.1" fill="#c8c6c4" stroke="#797775" stroke-width="2.0" stroke-linejoin="miter"/><path d="M1855.9 212.1V299.2H1942.9" stroke="#3b3a39" stroke-width="2.0"/><path d="M1612.2 429.1V495.7H1690.9M1612.2 495.7L1603.4 508.3" stroke="#3b3a39" stroke-width="2.0"/><path d="M1617.4 470.0L1622.0 464.2H1636.1L1631.5 470.0Z" fill="#fafafa" stroke="#3b3a39" stroke-width="2.0"/><path d="M1631.5 470.0L1636.1 464.2V510.4L1631.5 516.2Z" fill="#fafafa" stroke="#3b3a39" stroke-width="2.0"/><rect x="1617.4" y="470.0" width="14.1" height="46.2" fill="#fafafa" stroke="#3b3a39" stroke-width="2.0"/><path d="M1655.6 458.2L1660.2 452.4H1674.3L1669.7 458.2Z" fill="#fafafa" stroke="#3b3a39" stroke-width="2.0"/><path d="M1669.7 458.2L1674.3 452.4V510.4L1669.7 516.2Z" fill="#fafafa" stroke="#3b3a39" stroke-width="2.0"/><rect x="1655.6" y="458.2" width="14.1" height="58.0" fill="#fafafa" stroke="#3b3a39" stroke-width="2.0"/><path d="M1669.7 468.0L1674.3 462.2H1688.4L1683.8 468.0Z" fill="#c8c6c4" stroke="#797775" stroke-width="2.0"/><path d="M1683.8 468.0L1688.4 462.2V510.4L1683.8 516.2Z" fill="#c8c6c4" stroke="#797775" stroke-width="2.0"/><rect x="1669.7" y="468.0" width="14.1" height="48.2" fill="#c8c6c4" stroke="#797775" stroke-width="2.0"/><path d="M1631.5 449.8L1636.1 444.0H1650.5L1645.9 449.8Z" fill="#83beec" stroke="#0a60b6" stroke-width="2.0"/><path d="M1645.9 449.8L1650.5 444.0V510.4L1645.9 516.2Z" fill="#83beec" stroke="#0a60b6" stroke-width="2.0"/><rect x="1631.5" y="449.8" width="14.4" height="66.4" fill="#83beec" stroke="#0a60b6" stroke-width="2.0"/><path d="M1742 429.1V491.8H1816.9M1742 491.8L1729.6 504" stroke="#3b3a39" stroke-width="2.0"/><path d="M1770.8 494.1L1776.6 488.3V510.4L1770.8 516.2Z" fill="#fafafa" stroke="#3b3a39" stroke-width="2.0"/><rect x="1751.7" y="494.1" width="19.1" height="22.1" fill="#fafafa" stroke="#3b3a39" stroke-width="2.0"/><path d="M1751.7 464.0L1757.5 458.2H1776.6L1770.8 464.0Z" fill="#83beec" stroke="#0a60b6" stroke-width="2.0"/><path d="M1770.8 464.0L1776.6 458.2V488.3L1770.8 494.1Z" fill="#83beec" stroke="#0a60b6" stroke-width="2.0"/><rect x="1751.7" y="464.0" width="19.1" height="30.1" fill="#83beec" stroke="#0a60b6" stroke-width="2.0"/><path d="M1802.6 478.1L1808.4 472.3V510.4L1802.6 516.2Z" fill="#fafafa" stroke="#3b3a39" stroke-width="2.0"/><rect x="1783.7" y="478.1" width="18.9" height="38.1" fill="#fafafa" stroke="#3b3a39" stroke-width="2.0"/><path d="M1783.7 446.0L1789.5 440.2H1808.4L1802.6 446.0Z" fill="#83beec" stroke="#0a60b6" stroke-width="2.0"/><path d="M1802.6 446.0L1808.4 440.2V472.3L1802.6 478.1Z" fill="#83beec" stroke="#0a60b6" stroke-width="2.0"/><rect x="1783.7" y="446.0" width="18.9" height="32.1" fill="#83beec" stroke="#0a60b6" stroke-width="2.0"/><path d="M1868 429.1V491.8H1942.9M1868 491.8L1855.6 504" stroke="#3b3a39" stroke-width="2.0"/><path d="M1896.8 494.1L1902.6 488.3V510.4L1896.8 516.2Z" fill="#fafafa" stroke="#3b3a39" stroke-width="2.0"/><rect x="1877.7" y="494.1" width="19.1" height="22.1" fill="#fafafa" stroke="#3b3a39" stroke-width="2.0"/><path d="M1877.7 446.0L1883.5 440.2H1902.6L1896.8 446.0Z" fill="#83beec" stroke="#0a60b6" stroke-width="2.0"/><path d="M1896.8 446.0L1902.6 440.2V488.3L1896.8 494.1Z" fill="#83beec" stroke="#0a60b6" stroke-width="2.0"/><rect x="1877.7" y="446.0" width="19.1" height="48.1" fill="#83beec" stroke="#0a60b6" stroke-width="2.0"/><path d="M1928.6 464.0L1934.4 458.2V510.4L1928.6 516.2Z" fill="#fafafa" stroke="#3b3a39" stroke-width="2.0"/><rect x="1910.0" y="464.0" width="18.6" height="52.2" fill="#fafafa" stroke="#3b3a39" stroke-width="2.0"/><path d="M1910.0 446.0L1915.8 440.2H1934.4L1928.6 446.0Z" fill="#83beec" stroke="#0a60b6" stroke-width="2.0"/><path d="M1928.6 446.0L1934.4 440.2V458.2L1928.6 464.0Z" fill="#83beec" stroke="#0a60b6" stroke-width="2.0"/><rect x="1910.0" y="446.0" width="18.6" height="18.0" fill="#83beec" stroke="#0a60b6" stroke-width="2.0"/><path d="M1989.9 429.1V500H2068.6M1989.9 500L1981.6 511.7" stroke="#3b3a39" stroke-width="2.0"/><path d="M2005.9 448.0L2010.3 442.2H2024.8L2020.4 448.0Z" fill="#83beec" stroke="#0a60b6" stroke-width="2.0"/><path d="M2020.4 448.0L2024.8 442.2V504.6L2020.4 510.4Z" fill="#83beec" stroke="#0a60b6" stroke-width="2.0"/><rect x="2005.9" y="448.0" width="14.5" height="62.4" fill="#83beec" stroke="#0a60b6" stroke-width="2.0"/><path d="M1993.9 473.6L1997.9 467.8H2012.4L2008.4 473.6Z" fill="#fafafa" stroke="#3b3a39" stroke-width="2.0"/><path d="M2008.4 473.6L2012.4 467.8V510.4L2008.4 516.2Z" fill="#fafafa" stroke="#3b3a39" stroke-width="2.0"/><rect x="1993.9" y="473.6" width="14.5" height="42.6" fill="#fafafa" stroke="#3b3a39" stroke-width="2.0"/><path d="M2041.9 446.0L2046.3 440.2H2060.7L2056.3 446.0Z" fill="#83beec" stroke="#0a60b6" stroke-width="2.0"/><path d="M2056.3 446.0L2060.7 440.2V502.5L2056.3 508.3Z" fill="#83beec" stroke="#0a60b6" stroke-width="2.0"/><rect x="2041.9" y="446.0" width="14.4" height="62.3" fill="#83beec" stroke="#0a60b6" stroke-width="2.0"/><path d="M2030.0 462.0L2034.4 456.2H2048.4L2044.0 462.0Z" fill="#fafafa" stroke="#3b3a39" stroke-width="2.0"/><path d="M2044.0 462.0L2048.4 456.2V510.4L2044.0 516.2Z" fill="#fafafa" stroke="#3b3a39" stroke-width="2.0"/><rect x="2030.0" y="462.0" width="14.0" height="54.2" fill="#fafafa" stroke="#3b3a39" stroke-width="2.0"/><rect x="1603.9" y="669.5" width="50.3" height="13.7" fill="#fafafa" stroke="#3b3a39" stroke-width="2.0" stroke-linejoin="miter"/><rect x="1603.9" y="654.6" width="80.7" height="14.9" fill="#83beec" stroke="#0a60b6" stroke-width="2.0" stroke-linejoin="miter"/><rect x="1603.9" y="693.2" width="38.1" height="13.2" fill="#c8c6c4" stroke="#797775" stroke-width="2.0" stroke-linejoin="miter"/><rect x="1603.9" y="706.4" width="62.4" height="14.9" fill="#fafafa" stroke="#3b3a39" stroke-width="2.0" stroke-linejoin="miter"/><path d="M1603.9 646V733H1690.9" stroke="#3b3a39" stroke-width="2.0"/><rect x="1729.9" y="658.7" width="27.6" height="22.0" fill="#fafafa" stroke="#3b3a39" stroke-width="2.0" stroke-linejoin="miter"/><rect x="1757.5" y="658.7" width="30.9" height="22.0" fill="#83beec" stroke="#0a60b6" stroke-width="2.0" stroke-linejoin="miter"/><rect x="1729.9" y="694.9" width="38.0" height="22.0" fill="#fafafa" stroke="#3b3a39" stroke-width="2.0" stroke-linejoin="miter"/><rect x="1767.9" y="694.9" width="38.6" height="22.0" fill="#c8c6c4" stroke="#797775" stroke-width="2.0" stroke-linejoin="miter"/><path d="M1729.9 646V733H1816.9" stroke="#3b3a39" stroke-width="2.0"/><rect x="1855.9" y="658.7" width="19.6" height="22.0" fill="#fafafa" stroke="#3b3a39" stroke-width="2.0" stroke-linejoin="miter"/><rect x="1875.5" y="658.7" width="57.0" height="22.0" fill="#83beec" stroke="#0a60b6" stroke-width="2.0" stroke-linejoin="miter"/><rect x="1855.9" y="694.9" width="50.1" height="22.0" fill="#fafafa" stroke="#3b3a39" stroke-width="2.0" stroke-linejoin="miter"/><rect x="1906.0" y="694.9" width="26.5" height="22.0" fill="#c8c6c4" stroke="#797775" stroke-width="2.0" stroke-linejoin="miter"/><path d="M1855.9 646V733H1942.9" stroke="#3b3a39" stroke-width="2.0"/><path d="M1619.7 863.2V942H1690.6M1619.7 942L1608 950.3" stroke="#3b3a39" stroke-width="2.0"/><path d="M1648.0 865.9L1654.0 871.6V885.6L1648.0 879.9Z" fill="#fafafa" stroke="#3b3a39" stroke-width="2.0"/><rect x="1604.1" y="865.9" width="43.9" height="14.0" fill="#fafafa" stroke="#3b3a39" stroke-width="2.0"/><path d="M1604.1 893.7V895.4L1607.3 897.9H1674L1668 893.7Z" fill="#8cc8f8" stroke="#3b3a39" stroke-width="2.0"/><path d="M1668.0 879.9L1674.0 884.3V898.1L1668.0 893.7Z" fill="#83beec" stroke="#3b3a39" stroke-width="2.0"/><rect x="1604.1" y="879.9" width="63.9" height="13.8" fill="#83beec" stroke="#3b3a39" stroke-width="2.0"/><path d="M1660.1 903.8L1665.9 908.6V922.4L1660.1 917.6Z" fill="#fafafa" stroke="#3b3a39" stroke-width="2.0"/><path d="M1604.1 917.6L1609.9 922.4H1665.9L1660.1 917.6Z" fill="#fafafa" stroke="#3b3a39" stroke-width="2.0"/><rect x="1604.1" y="903.8" width="56.0" height="13.8" fill="#fafafa" stroke="#3b3a39" stroke-width="2.0"/><path d="M1604.1 931.6V933.4L1607.3 935.9H1655.8L1650 931.6Z" fill="#8cc8f8" stroke="#3b3a39" stroke-width="2.0"/><path d="M1650.0 918.4L1655.8 922.7V935.9L1650.0 931.6Z" fill="#83beec" stroke="#3b3a39" stroke-width="2.0"/><rect x="1604.1" y="918.4" width="45.9" height="13.2" fill="#83beec" stroke="#3b3a39" stroke-width="2.0"/><path d="M1745.9 863.1V937.5H1816.9M1745.9 937.5L1733.5 950.4" stroke="#3b3a39" stroke-width="2.0"/><path d="M1729.7 880.3L1735.7 874.3H1757.6L1751.6 880.3Z" fill="#fafafa" stroke="#3b3a39" stroke-width="2.0"/><rect x="1729.7" y="880.3" width="21.9" height="17.6" fill="#fafafa" stroke="#3b3a39" stroke-width="2.0"/><path d="M1751.6 880.3L1757.6 874.3H1788.5L1782.5 880.3Z" fill="#83beec" stroke="#0a60b6" stroke-width="2.0"/><path d="M1782.5 880.3L1788.5 874.3V891.9L1782.5 897.9Z" fill="#83beec" stroke="#0a60b6" stroke-width="2.0"/><rect x="1751.6" y="880.3" width="30.9" height="17.6" fill="#83beec" stroke="#0a60b6" stroke-width="2.0"/><path d="M1729.7 912.3L1735.7 906.3H1773.9L1767.9 912.3Z" fill="#fafafa" stroke="#3b3a39" stroke-width="2.0"/><rect x="1729.7" y="912.3" width="38.2" height="17.4" fill="#fafafa" stroke="#3b3a39" stroke-width="2.0"/><path d="M1767.9 912.3L1773.9 906.3H1806.5L1800.5 912.3Z" fill="#83beec" stroke="#0a60b6" stroke-width="2.0"/><path d="M1800.5 912.3L1806.5 906.3V923.7L1800.5 929.7Z" fill="#83beec" stroke="#0a60b6" stroke-width="2.0"/><rect x="1767.9" y="912.3" width="32.6" height="17.4" fill="#83beec" stroke="#0a60b6" stroke-width="2.0"/><path d="M1871.9 863.1V937.5H1942.9M1871.9 937.5L1859.5 950.4" stroke="#3b3a39" stroke-width="2.0"/><path d="M1855.7 880.3L1861.7 874.3H1881.5L1875.5 880.3Z" fill="#fafafa" stroke="#3b3a39" stroke-width="2.0"/><rect x="1855.7" y="880.3" width="19.8" height="17.6" fill="#fafafa" stroke="#3b3a39" stroke-width="2.0"/><path d="M1875.5 880.3L1881.5 874.3H1930.7L1924.7 880.3Z" fill="#83beec" stroke="#0a60b6" stroke-width="2.0"/><path d="M1924.7 880.3L1930.7 874.3V891.9L1924.7 897.9Z" fill="#83beec" stroke="#0a60b6" stroke-width="2.0"/><rect x="1875.5" y="880.3" width="49.2" height="17.6" fill="#83beec" stroke="#0a60b6" stroke-width="2.0"/><path d="M1855.7 912.3L1861.7 906.3H1897.8L1891.8 912.3Z" fill="#fafafa" stroke="#3b3a39" stroke-width="2.0"/><rect x="1855.7" y="912.3" width="36.1" height="17.4" fill="#fafafa" stroke="#3b3a39" stroke-width="2.0"/><path d="M1891.8 912.3L1897.8 906.3H1930.7L1924.7 912.3Z" fill="#83beec" stroke="#0a60b6" stroke-width="2.0"/><path d="M1924.7 912.3L1930.7 906.3V923.7L1924.7 929.7Z" fill="#83beec" stroke="#0a60b6" stroke-width="2.0"/><rect x="1891.8" y="912.3" width="32.9" height="17.4" fill="#83beec" stroke="#0a60b6" stroke-width="2.0"/><rect x="1619.0" y="1011.8" width="8.6" height="28.2" fill="#83beec" stroke="#0a60b6" stroke-width="2.0" stroke-linejoin="miter"/><rect x="1631.2" y="1020.3" width="8.0" height="19.7" fill="#fafafa" stroke="#3b3a39" stroke-width="2.0" stroke-linejoin="miter"/><path d="M1612.9 1009.3V1040.2H1643.4" stroke="#3b3a39" stroke-width="1.6"/></svg>
</div></body></html>
